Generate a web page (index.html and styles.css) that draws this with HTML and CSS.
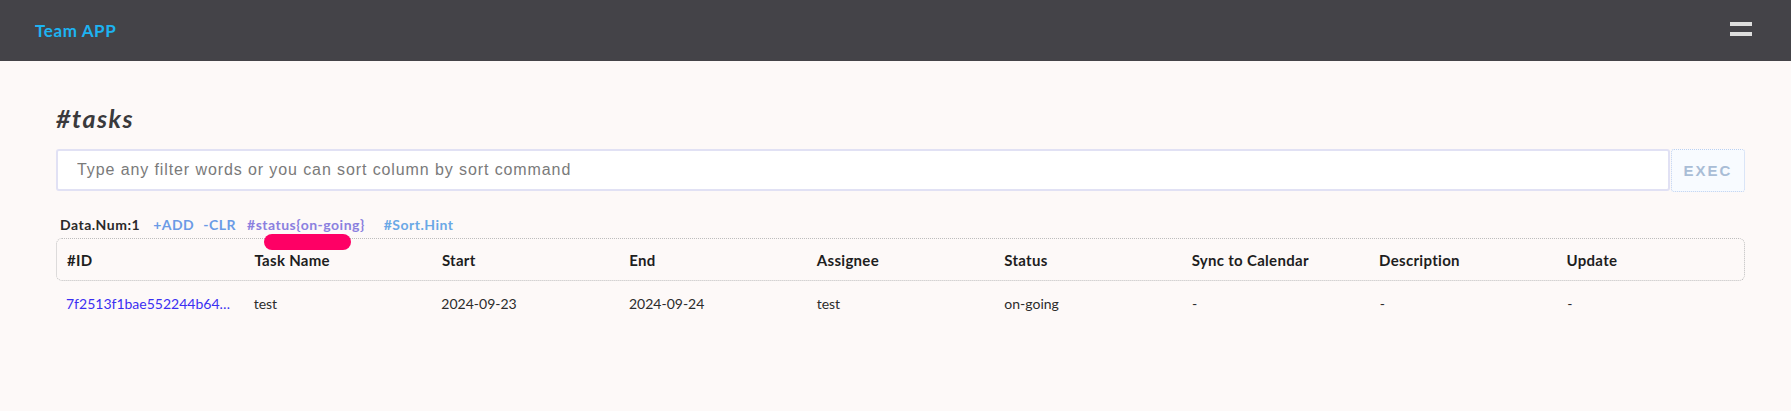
FILE: index.html
```html
<!DOCTYPE html>
<html lang="en">

<head>
    <meta charset="UTF-8">
    <meta name="viewport" content="width=device-width, initial-scale=1.0">
    <title>Team APP</title>
    <link rel="stylesheet" href="styles.css">
</head>

<body>
    <header class="topbar">
        <a class="brand">Team APP</a>
        <div class="menu-btn">
            <span></span>
            <span></span>
        </div>
    </header>

    <main class="page">
        <h1 class="title">#tasks</h1>

        <div class="filter-box">
            <input type="text" class="filter-input" placeholder="Type any filter words or you can sort column by sort command">
            <button type="button" class="exec">EXEC</button>
        </div>

        <div class="info-bar">
            <span class="num">Data.Num:1</span>
            <a class="cmd add">+ADD</a>
            <a class="cmd clr">-CLR</a>
            <a class="cmd status">#status{on-going}<i class="mark"></i></a>
            <a class="cmd hint">#Sort.Hint</a>
        </div>

        <div class="table">
            <div class="row head">
                <div class="cell">#ID</div>
                <div class="cell">Task Name</div>
                <div class="cell">Start</div>
                <div class="cell">End</div>
                <div class="cell">Assignee</div>
                <div class="cell">Status</div>
                <div class="cell">Sync to Calendar</div>
                <div class="cell">Description</div>
                <div class="cell">Update</div>
            </div>
            <div class="row">
                <div class="cell id">7f2513f1bae552244b64…</div>
                <div class="cell">test</div>
                <div class="cell">2024-09-23</div>
                <div class="cell">2024-09-24</div>
                <div class="cell">test</div>
                <div class="cell">on-going</div>
                <div class="cell">-</div>
                <div class="cell">-</div>
                <div class="cell">-</div>
            </div>
        </div>
    </main>
</body>

</html>
```

FILE: styles.css
```css
* {
    box-sizing: border-box;
}

body {
    margin: 0;
    padding: 0;
    background-color: #fdf9f8;
    font-family: Lato, "Noto Sans", sans-serif;
    color: #222;
}

.topbar {
    height: 61px;
    background-color: #444348;
    display: flex;
    justify-content: space-between;
    align-items: center;
    padding: 0 39px 0 35px;
}

.brand {
    color: #1db3f2;
    font-size: 17px;
    font-weight: bold;
    letter-spacing: 0.6px;
}

.menu-btn {
    width: 22px;
    display: flex;
    flex-direction: column;
    gap: 6px;
    margin-top: -4px;
}

.menu-btn span {
    display: block;
    height: 4px;
    background-color: #dedede;
}

.page {
    padding: 42px 46px 0 56px;
}

.title {
    margin: 0 0 16px 0;
    font-size: 25px;
    font-style: italic;
    font-weight: bold;
    color: #3a3a3c;
    line-height: 30px;
    letter-spacing: 1.5px;
}

.filter-box {
    display: flex;
    height: 43px;
}

.filter-input {
    flex: 1;
    height: 42px;
    border: 2px solid #e1e1f4;
    border-radius: 3px;
    background-color: #fff;
    padding: 0 19px;
    font-family: "Liberation Sans", Arial, sans-serif;
    font-size: 16px;
    letter-spacing: 0.9px;
    outline: none;
}

.filter-input::placeholder {
    color: #7a7a7a;
}

.exec {
    width: 74px;
    height: 43px;
    margin-left: 1px;
    border: 1px dotted #bcd0f0;
    border-radius: 3px;
    background-color: #f8fbff;
    color: #a9bdd6;
    font-family: "Liberation Sans", Arial, sans-serif;
    font-size: 15px;
    font-weight: bold;
    letter-spacing: 2px;
    padding: 0;
}

.info-bar {
    display: flex;
    align-items: center;
    padding: 0 0 0 4px;
    margin-top: 18px;
    height: 29px;
    font-size: 14px;
    font-weight: bold;
    letter-spacing: 0.5px;
}

.num {
    color: #2a2a2a;
    margin-right: 13px;
}

.cmd {
    position: relative;
}

.add {
    color: #6b9be6;
    margin-right: 9px;
}

.clr {
    color: #6b9be6;
    margin-right: 11px;
}

.status {
    color: #8b80df;
    margin-right: 19px;
}

.hint {
    color: #6aa8e6;
}

.mark {
    position: absolute;
    left: 17px;
    top: 18px;
    width: 87px;
    height: 16px;
    border-radius: 8px;
    background-color: #fe0065;
}

.table {
    margin-top: -1px;
    font-size: 14px;
}

.row {
    display: grid;
    grid-template-columns: repeat(9, 1fr);
    align-items: center;
}

.head {
    height: 43px;
    border: 1px dotted #bdbdbd;
    border-radius: 6px;
    font-size: 15px;
    font-weight: bold;
    letter-spacing: 0.3px;
    color: #1e1e1e;
}

.row:not(.head) {
    height: 45px;
    color: #2c2c2c;
}

.cell {
    padding: 0 10px;
    white-space: nowrap;
}

.id {
    color: #3b2ff2;
}
```
